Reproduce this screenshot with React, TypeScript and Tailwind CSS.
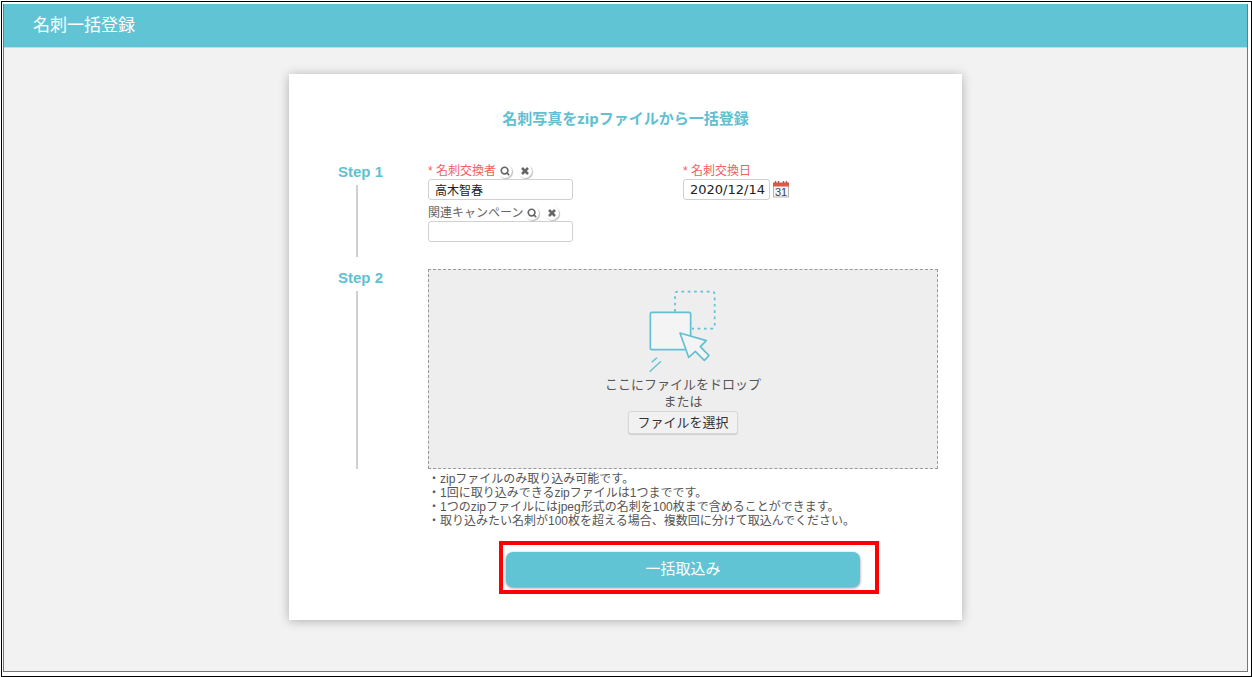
import React, { useRef, useState } from 'react';
import { Search, X } from 'lucide-react';

const notes = [
  '・zipファイルのみ取り込み可能です。',
  '・1回に取り込みできるzipファイルは1つまでです。',
  '・1つのzipファイルにはjpeg形式の名刺を100枚まで含めることができます。',
  '・取り込みたい名刺が100枚を超える場合、複数回に分けて取込んでください。',
];

const inputClass =
  'block h-[21px] rounded-[3px] border border-[#d0d0d0] bg-white text-[#222] outline-none focus:border-[#61c4d5]';

function LookupButtons({ name, onClear }: { name: string; onClear: () => void }) {
  const buttonClass =
    'flex h-[14px] w-[14px] items-center justify-center rounded-full bg-white text-[#666] shadow-[1px_1px_1px_#bbb]';

  return (
    <div className="ml-0.5 flex gap-1.5">
      <button type="button" aria-label={`${name}を検索`} className={buttonClass}>
        <Search className="h-2.5 w-2.5" strokeWidth={4} />
      </button>
      <button type="button" aria-label={`${name}をクリア`} onClick={onClear} className={buttonClass}>
        <X className="h-3 w-3" strokeWidth={5} strokeLinecap="butt" />
      </button>
    </div>
  );
}

function CalendarIcon() {
  return (
    <svg viewBox="0 0 16 17" className="h-[17px] w-4" aria-hidden="true">
      <rect x="0.5" y="2.5" width="15" height="13.5" fill="#f6f6f6" stroke="#b5b5b5" />
      <rect x="0" y="1.5" width="16" height="4" fill="#e0574a" />
      <path d="M2.5 0v3M5.5 0v3M10.5 0v3M13.5 0v3" stroke="#a8605a" strokeWidth="1.4" />
      <text x="8" y="14.5" textAnchor="middle" fontSize="11" fill="#444">
        31
      </text>
    </svg>
  );
}

function DropIcon() {
  return (
    <svg viewBox="204 56 210 252" className="h-[84px] w-[70px]" fill="none" stroke="#61c0d2" strokeWidth="5" aria-hidden="true">
      <path
        d="M285 124V72q0-8 8-8h103q8 0 8 8v95q0 8-8 8h-60"
        strokeDasharray="8 11"
      />
      <rect x="211" y="126" width="121" height="112" rx="5" fill="#f4f4f4" />
      <path d="M300 188L379 211L361 229L387 256L373 270L346 243L326 261Z" fill="#f4f4f4" strokeLinejoin="round" />
      <path d="M215 276L231 262M209 304L243 273" strokeWidth="4" />
    </svg>
  );
}

function Step({ title, children }: { title: string; children: React.ReactNode }) {
  return (
    <section className="flex">
      <div className="flex w-[90px] shrink-0 flex-col">
        <h3 className="text-[15px] leading-[18px] font-bold whitespace-nowrap text-[#61c0d2]">{title}</h3>
        <div className="mt-1 ml-[18px] w-0.5 flex-1 bg-[#d0d0d0]" />
      </div>
      <div className="min-w-0 flex-1">{children}</div>
    </section>
  );
}

export default function App() {
  const [owner, setOwner] = useState('高木智春');
  const [campaign, setCampaign] = useState('');
  const [date, setDate] = useState('2020/12/14');
  const fileRef = useRef<HTMLInputElement>(null);

  return (
    <div className="flex min-h-screen bg-white pt-px pl-px font-['Liberation_Sans','Noto_Sans_CJK_JP',sans-serif]">
      <div className="flex flex-1 border border-black pt-0.5 pr-[3px] pb-1 pl-px">
        <div className="flex flex-1 flex-col border-r border-b border-l border-[#777] bg-[#f2f2f2]">
          <header className="flex h-11 items-center border-b border-[#b5e0e8] bg-[#61c4d5] px-[29px]">
            <h1 className="text-[17px] leading-6 text-white">名刺一括登録</h1>
          </header>

          <main className="px-4 py-[26px]">
            <form
              onSubmit={(e) => e.preventDefault()}
              className="mx-auto w-full max-w-[673px] bg-white pt-[33px] pr-6 pb-[26px] pl-[49px] shadow-[0_1px_10px_rgba(0,0,0,0.28)]"
            >
              <h2 className="mb-[34px] pr-[25px] text-center font-['Noto_Sans','Noto_Sans_CJK_JP',sans-serif] text-[15px] leading-[22px] font-bold text-[#61c0d2]">
                名刺写真をzipファイルから一括登録
              </h2>

              <div className="flex flex-col gap-3">
                <Step title="Step 1">
                  <div className="grid grid-cols-2 pb-[15px] text-xs leading-4">
                    <div>
                      <div className="flex items-center">
                        <label htmlFor="owner" className="text-[#f0605f]">
                          * 名刺交換者
                        </label>
                        <LookupButtons name="名刺交換者" onClear={() => setOwner('')} />
                      </div>
                      <input
                        id="owner"
                        type="text"
                        value={owner}
                        onChange={(e) => setOwner(e.target.value)}
                        className={`${inputClass} w-[145px] px-1.5`}
                      />
                      <div className="mt-[5px] flex items-center">
                        <label htmlFor="campaign" className="text-[#666]">
                          関連キャンペーン
                        </label>
                        <LookupButtons name="関連キャンペーン" onClear={() => setCampaign('')} />
                      </div>
                      <input
                        id="campaign"
                        type="text"
                        value={campaign}
                        onChange={(e) => setCampaign(e.target.value)}
                        className={`${inputClass} w-[145px] px-1.5`}
                      />
                    </div>
                    <div>
                      <label htmlFor="date" className="block text-[#f0605f]">
                        * 名刺交換日
                      </label>
                      <div className="flex items-center gap-[3px]">
                        <input
                          id="date"
                          type="text"
                          value={date}
                          onChange={(e) => setDate(e.target.value)}
                          className={`${inputClass} w-[87px] pr-0.5 pl-1.5 font-['DejaVu_Sans',sans-serif] text-[13px]`}
                        />
                        <button type="button" aria-label="日付を選択">
                          <CalendarIcon />
                        </button>
                      </div>
                    </div>
                  </div>
                </Step>

                <Step title="Step 2">
                  <div className="flex min-h-[200px] flex-col items-center border border-dashed border-[#999] bg-[#eee] pt-[19px] text-[13px] leading-[17px] text-[#555]">
                    <DropIcon />
                    <p className="mt-[3px] text-center">
                      ここにファイルをドロップ
                      <br />
                      または
                    </p>
                    <button
                      type="button"
                      onClick={() => fileRef.current?.click()}
                      className="mt-px h-[23px] rounded-[3px] border border-[#d8d8d8] bg-[#f1f1f1] px-2 text-[13px] text-[#333] shadow-[0_1px_1px_#ccc]"
                    >
                      ファイルを選択
                    </button>
                    <input ref={fileRef} type="file" accept=".zip" aria-label="zipファイル" className="hidden" />
                  </div>
                </Step>
              </div>

              <div className="pl-[90px]">
                <ul className="mt-[3px] text-xs leading-[14px] text-[#555]">
                  {notes.map((note) => (
                    <li key={note}>{note}</li>
                  ))}
                </ul>

                <div className="mt-[13px] ml-[71px] max-w-[380px] border-4 border-[#f00] pt-[7px] pr-[15px] pb-[3px] pl-[3px]">
                  <button
                    type="submit"
                    className="block h-[35px] w-full rounded-[7px] bg-[#61c4d5] text-[15px] text-white shadow-[0_1px_3px_rgba(0,0,0,0.45)]"
                  >
                    一括取込み
                  </button>
                </div>
              </div>
            </form>
          </main>
        </div>
      </div>
    </div>
  );
}
